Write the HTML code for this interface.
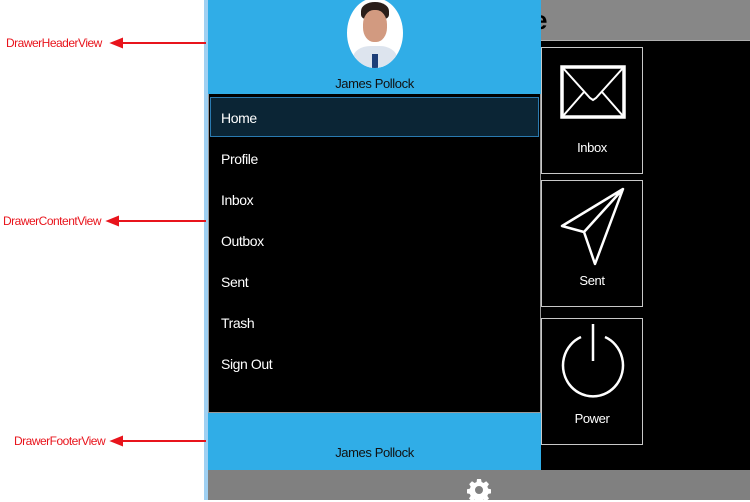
<!DOCTYPE html>
<html><head><meta charset="utf-8"><style>
*{margin:0;padding:0;box-sizing:border-box}
body{width:750px;height:500px;overflow:hidden;background:#fff;position:relative;font-family:"Liberation Sans",sans-serif}
.a{position:absolute}
.lbl{color:#e8141c;font-size:12px;letter-spacing:-0.5px}
.item{position:absolute;left:221px;color:#fff;font-size:14px;letter-spacing:-0.4px}
.tile{position:absolute;left:541px;width:102px;border:1px solid #c8c8c8;background:#000;color:#fff;font-size:13px;text-align:center;letter-spacing:-0.4px}
</style></head><body>
<div class="a" style="left:204px;top:0;width:4px;height:500px;background:#9fd0f2"></div>
<div class="a" style="left:541px;top:0;width:209px;height:41px;background:#878787"></div>
<div class="a" style="left:541px;top:40px;width:209px;height:1px;background:#b0b0b0"></div>
<div class="a" style="left:533px;top:5px;font-size:26px;font-weight:bold;color:#000">e</div>
<div class="a" style="left:541px;top:41px;width:209px;height:429px;background:#000"></div>
<div class="a" style="left:208px;top:470px;width:542px;height:30px;background:#808080"></div>
<svg class="a" style="left:467px;top:478px" width="24" height="24" viewBox="0 0 24 24"><path fill="#fff" d="M10 1h4l.6 3 2 1 2.6-1.7 2.8 2.8-1.7 2.6 1 2 3 .6v4l-3 .6-1 2 1.7 2.6-2.8 2.8-2.6-1.7-2 1-.6 3h-4l-.6-3-2-1-2.6 1.7-2.8-2.8 1.7-2.6-1-2-3-.6v-4l3-.6 1-2L2.2 6.1 5 3.3l2.6 1.7 2-1zM12 8a4 4 0 100 8 4 4 0 000-8z"/></svg>
<div class="tile" style="top:47px;height:127px">
<svg style="position:absolute;left:18px;top:17px" width="66" height="54"><rect x="2" y="2" width="62" height="50" fill="none" stroke="#fff" stroke-width="3.5"/><path d="M3 3 L30 33 L33 35 L36 33 L63 3 M3 51 L24 27 M63 51 L42 27" fill="none" stroke="#fff" stroke-width="2"/></svg>
<div style="position:absolute;left:0;right:0;top:92px">Inbox</div></div>
<div class="tile" style="top:180px;height:127px">
<svg style="position:absolute;left:18px;top:3px" width="66" height="85"><path d="M63 5 L2 42 L24 48 L35 80 Z M63 5 L24 48" fill="none" stroke="#fff" stroke-width="2.5" stroke-linejoin="round"/></svg>
<div style="position:absolute;left:0;right:0;top:92px">Sent</div></div>
<div class="tile" style="top:318px;height:127px">
<svg style="position:absolute;left:18px;top:2px" width="66" height="86"><path d="M45 16 A30 31 0 1 1 21 16" fill="none" stroke="#fff" stroke-width="2.5"/><path d="M33 3 V40" stroke="#fff" stroke-width="2.5"/></svg>
<div style="position:absolute;left:0;right:0;top:92px">Power</div></div>
<div class="a" style="left:208px;top:0;width:333px;height:94px;background:#30ade7"></div>
<div class="a" style="left:347px;top:-2px;width:56px;height:70px;border-radius:50%;background:#fff;overflow:hidden">
<div class="a" style="left:14px;top:4px;width:28px;height:18px;border-radius:50% 50% 30% 30%;background:#2a1e1a"></div>
<div class="a" style="left:16px;top:12px;width:24px;height:32px;border-radius:45%;background:#d29a80"></div>
<div class="a" style="left:6px;top:48px;width:44px;height:30px;border-radius:40% 40% 0 0;background:#dde4ee"></div>
<div class="a" style="left:25px;top:56px;width:6px;height:14px;background:#1d3e78"></div>
</div>
<div class="a" style="left:208px;top:76px;width:333px;text-align:center;font-size:13px;color:#111;letter-spacing:-0.4px">James Pollock</div>
<div class="a" style="left:208px;top:94px;width:333px;height:319px;background:#000;border:1px solid #999;border-top:none"></div>
<div class="a" style="left:210px;top:97px;width:329px;height:40px;background:#0b2535;border:1px solid #2a7ab0"></div>
<div class="item" style="top:110px">Home</div>
<div class="item" style="top:151px">Profile</div>
<div class="item" style="top:192px">Inbox</div>
<div class="item" style="top:233px">Outbox</div>
<div class="item" style="top:274px">Sent</div>
<div class="item" style="top:315px">Trash</div>
<div class="item" style="top:356px">Sign Out</div>
<div class="a" style="left:208px;top:413px;width:333px;height:57px;background:#30ade7"></div>
<div class="a" style="left:208px;top:445px;width:333px;text-align:center;font-size:13px;color:#111;letter-spacing:-0.4px">James Pollock</div>
<div class="a lbl" style="left:6px;top:36px">DrawerHeaderView</div>
<div class="a lbl" style="left:3px;top:214px">DrawerContentView</div>
<div class="a lbl" style="left:14px;top:434px">DrawerFooterView</div>
<svg class="a" style="left:0;top:0" width="210" height="500">
<g stroke="#e8141c" stroke-width="2" fill="#e8141c">
<line x1="118" y1="43" x2="206" y2="43"/><path d="M112 43 L122 39 L122 47Z"/>
<line x1="114" y1="221" x2="206" y2="221"/><path d="M108 221 L118 217 L118 225Z"/>
<line x1="118" y1="441" x2="206" y2="441"/><path d="M112 441 L122 437 L122 445Z"/>
</g></svg>
</body></html>
